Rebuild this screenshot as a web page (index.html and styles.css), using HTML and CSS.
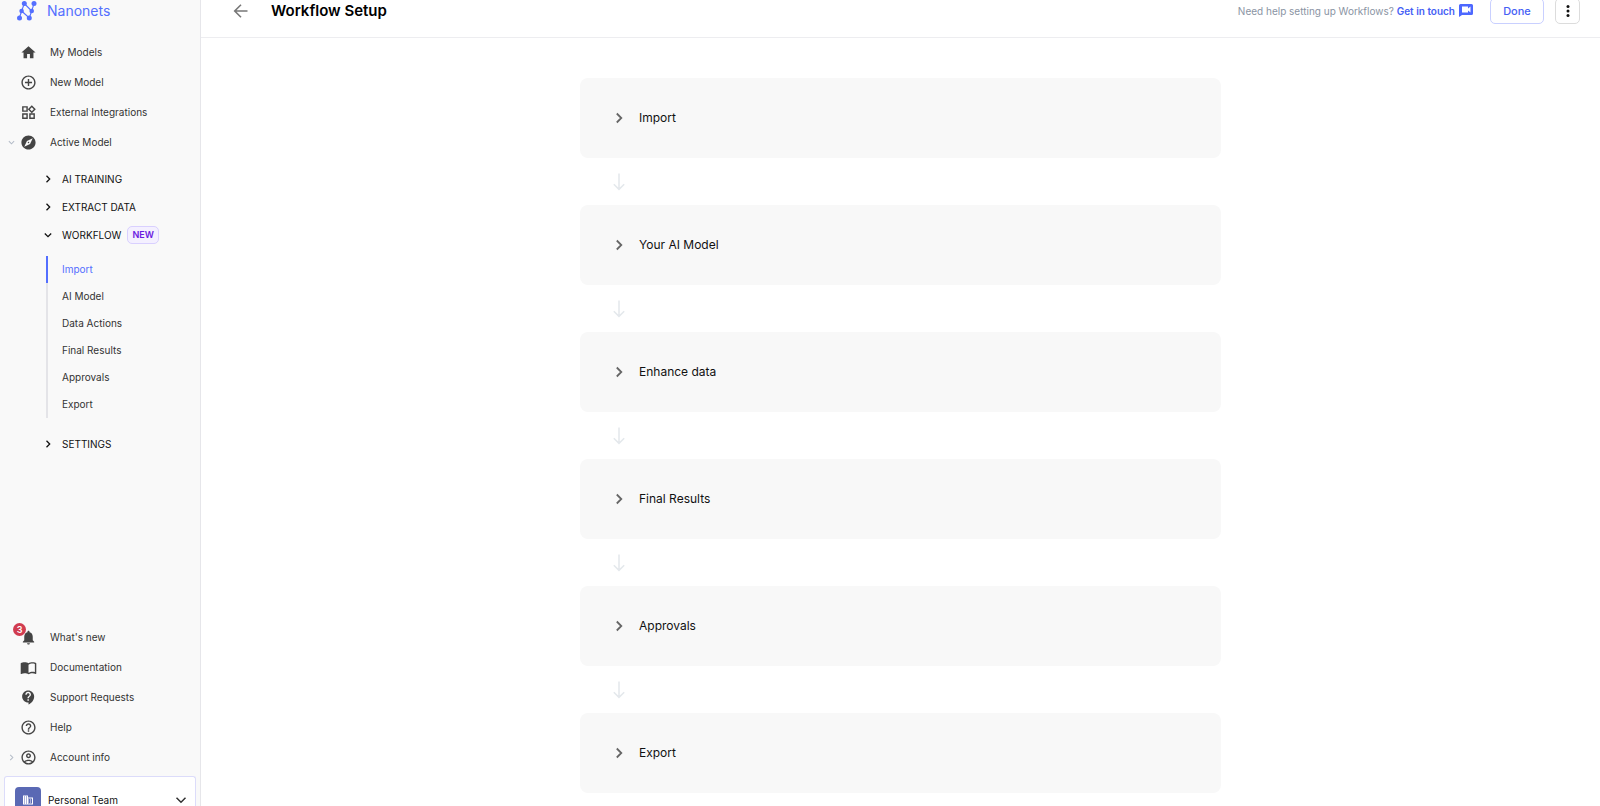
FILE: index.html
```html
<!DOCTYPE html>
<html lang="en">
<head>
<meta charset="utf-8">
<meta name="viewport" content="width=device-width, initial-scale=1">
<title>Workflow Setup - Nanonets</title>
<link rel="stylesheet" href="styles.css">
</head>
<body>
<div class="app">
  <aside class="sidebar">
    <a class="brand" href="#">
      <svg class="brand-logo" viewBox="0 0 20 20" aria-hidden="true">
        <path d="M2.400 17 4.600 10 7.300 2.600 14.700 10M4.600 10 12.300 17 14.700 10 17 2.600" fill="none" stroke="#546fff" stroke-width="1.100"/>
        <g fill="#546fff"><circle cx="7.300" cy="2.600" r="2.500"/><circle cx="17" cy="2.600" r="2.500"/><circle cx="4.600" cy="10" r="2.300"/><circle cx="14.700" cy="10" r="2.300"/><circle cx="2.500" cy="17" r="2.500"/><circle cx="12.300" cy="17" r="2.500"/></g>
      </svg>
      Nanonets
    </a>
    <nav class="menu" aria-label="Main">
      <a class="menu-item" href="#"><span class="twisty"></span><svg class="icon" viewBox="0 0 24 24"><path d="M10 20v-6h4v6h5v-8h3L12 3 2 12h3v8z"/></svg>My Models</a>
      <a class="menu-item" href="#"><span class="twisty"></span><svg class="icon" viewBox="0 0 24 24"><path d="M13 7h-2v4H7v2h4v4h2v-4h4v-2h-4V7zm-1-5C6.48 2 2 6.48 2 12s4.480 10 10 10 10-4.480 10-10S17.520 2 12 2zm0 18c-4.410 0-8-3.590-8-8s3.590-8 8-8 8 3.590 8 8-3.590 8-8 8z"/></svg>New Model</a>
      <a class="menu-item" href="#"><span class="twisty"></span><svg class="icon" viewBox="0 0 24 24"><path d="M16.660 4.520l2.830 2.830-2.830 2.830-2.830-2.830 2.830-2.830M9 5v4H5V5h4m10 10v4h-4v-4h4M9 15v4H5v-4h4m7.660-13.310L11 7.340 16.660 13l5.660-5.660-5.660-5.650zM11 3H3v8h8V3zm10 10h-8v8h8v-8zm-10 0H3v8h8v-8z"/></svg>External Integrations</a>
      <a class="menu-item" href="#" aria-expanded="true"><span class="twisty"><svg class="mini" viewBox="0 0 8 8"><path d="M1 2.500 4 5.500 7 2.500"/></svg></span><svg class="icon" viewBox="0 0 24 24"><path d="M12 10.900c-.61 0-1.100.49-1.100 1.100s.49 1.100 1.100 1.100c.61 0 1.100-.49 1.100-1.100s-.49-1.100-1.100-1.100zM12 2C6.480 2 2 6.480 2 12s4.480 10 10 10 10-4.480 10-10S17.520 2 12 2zm2.190 12.190L6 18l3.810-8.190L18 6l-3.810 8.190z"/></svg>Active Model</a>
    </nav>
    <nav class="sections" aria-label="Active model">
      <button class="section" type="button"><svg class="chev" viewBox="0 0 8 8"><path d="M2.500 .8 5.700 4 2.500 7.200"/></svg>AI TRAINING</button>
      <button class="section" type="button"><svg class="chev" viewBox="0 0 8 8"><path d="M2.500 .8 5.700 4 2.500 7.200"/></svg>EXTRACT DATA</button>
      <button class="section" type="button" aria-expanded="true"><svg class="chev" viewBox="0 0 8 8"><path d="M.8 2.500 4 5.700 7.200 2.500"/></svg>WORKFLOW<span class="tag">NEW</span></button>
      <div class="steps">
        <a class="step-link active" href="#import" aria-current="true">Import</a>
        <a class="step-link" href="#model">AI Model</a>
        <a class="step-link" href="#enhance">Data Actions</a>
        <a class="step-link" href="#results">Final Results</a>
        <a class="step-link" href="#approvals">Approvals</a>
        <a class="step-link" href="#export">Export</a>
      </div>
      <button class="section" type="button"><svg class="chev" viewBox="0 0 8 8"><path d="M2.500 .8 5.700 4 2.500 7.200"/></svg>SETTINGS</button>
    </nav>
    <nav class="menu menu-bottom" aria-label="Support">
      <a class="menu-item" href="#"><span class="twisty"></span><span class="icon-wrap"><svg class="icon" viewBox="0 0 24 24"><path d="M12 22c1.100 0 2-.9 2-2h-4c0 1.100.89 2 2 2zm6-6v-5c0-3.070-1.640-5.640-4.500-6.320V4c0-.83-.67-1.500-1.500-1.500s-1.500.67-1.500 1.500v.68C7.630 5.360 6 7.920 6 11v5l-2 2v1h16v-1l-2-2z"/></svg><span class="badge">3</span></span>What's new</a>
      <a class="menu-item" href="#"><span class="twisty"></span><svg class="icon" viewBox="0 0 24 24"><path d="M21 5c-1.110-.35-2.330-.5-3.500-.5-1.950 0-4.050.4-5.500 1.500-1.450-1.100-3.550-1.500-5.500-1.500S2.450 4.900 1 6v14.650c0 .25.25.5.5.5.1 0 .15-.05.25-.05C3.100 20.450 5.050 20 6.500 20c1.950 0 4.050.4 5.500 1.500 1.350-.85 3.800-1.500 5.500-1.500 1.650 0 3.350.3 4.750 1.050.1.05.15.05.25.05.25 0 .5-.25.5-.5V6c-.6-.45-1.250-.75-2-1zm0 13.500c-1.100-.35-2.300-.5-3.500-.5-1.700 0-4.150.65-5.500 1.500V8c1.350-.85 3.800-1.500 5.500-1.500 1.200 0 2.400.15 3.500.5v11.500z"/></svg>Documentation</a>
      <a class="menu-item" href="#"><span class="twisty"></span><svg class="icon" viewBox="0 0 24 24"><path d="M11.500 2C6.810 2 3 5.810 3 10.500S6.810 19 11.500 19h.5v3c4.860-2.340 8-7 8-11.500C20 5.810 16.190 2 11.500 2zm1 14.500h-2v-2h2v2zm0-3.500h-2c0-3.250 3-3 3-5 0-1.100-.9-2-2-2s-2 .9-2 2h-2c0-2.210 1.790-4 4-4s4 1.790 4 4c0 2.500-3 2.750-3 5z"/></svg>Support Requests</a>
      <a class="menu-item" href="#"><span class="twisty"></span><svg class="icon" viewBox="0 0 24 24"><path d="M11 18h2v-2h-2v2zm1-16C6.480 2 2 6.480 2 12s4.480 10 10 10 10-4.480 10-10S17.520 2 12 2zm0 18c-4.410 0-8-3.590-8-8s3.590-8 8-8 8 3.590 8 8-3.590 8-8 8zm0-14c-2.210 0-4 1.790-4 4h2c0-1.100.9-2 2-2s2 .9 2 2c0 2-3 1.750-3 5h2c0-2.250 3-2.500 3-5 0-2.210-1.790-4-4-4z"/></svg>Help</a>
      <a class="menu-item" href="#"><span class="twisty"><svg class="mini" viewBox="0 0 8 8"><path d="M2.500 1 5.500 4 2.500 7"/></svg></span><svg class="icon" viewBox="0 0 24 24"><path fill-rule="evenodd" d="M12 2C6.480 2 2 6.480 2 12s4.480 10 10 10 10-4.480 10-10S17.520 2 12 2zM7.350 18.500C8.660 17.560 10.260 17 12 17s3.340.56 4.650 1.500C15.340 19.440 13.740 20 12 20s-3.340-.56-4.650-1.500zm10.790-1.380C16.450 15.800 14.320 15 12 15s-4.450.8-6.140 2.120C4.700 15.730 4 13.950 4 12c0-4.420 3.580-8 8-8s8 3.580 8 8c0 1.950-.7 3.730-1.860 5.120zM12 6c-1.930 0-3.500 1.570-3.500 3.500S10.070 13 12 13s3.500-1.570 3.500-3.500S13.930 6 12 6zm0 5c-.83 0-1.500-.67-1.500-1.500S11.170 8 12 8s1.500.67 1.500 1.500S12.830 11 12 11z"/></svg>Account info</a>
    </nav>
    <button class="team" type="button">
      <span class="team-mark"><svg viewBox="0 0 24 24"><path d="M12 7V3H2v18h20V7H12zM6 19H4v-2h2v2zm0-4H4v-2h2v2zm0-4H4V9h2v2zm0-4H4V5h2v2zm4 12H8v-2h2v2zm0-4H8v-2h2v2zm0-4H8V9h2v2zm0-4H8V5h2v2zm10 12h-8v-2h2v-2h-2v-2h2v-2h-2V9h8v10zm-2-8h-2v2h2v-2zm0 4h-2v2h2v-2z"/></svg></span>
      <span class="team-name">Personal Team</span>
      <svg class="team-chev" viewBox="0 0 12 12"><path d="M1.500 3.800 6 8.300 10.500 3.800"/></svg>
    </button>
  </aside>

  <div class="page">
    <header class="topbar">
      <button class="back" type="button" aria-label="Back"><svg viewBox="0 0 16 16"><path d="M14.500 8H2M8 1.700 1.700 8 8 14.300"/></svg></button>
      <h1 class="title">Workflow Setup</h1>
      <p class="help">Need help setting up Workflows? <a href="#">Get in touch</a></p>
      <svg class="chat" viewBox="0 0 14 13" aria-hidden="true"><path fill-rule="evenodd" d="M1.500 0h11A1.500 1.500 0 0 1 14 1.500v8A1.500 1.500 0 0 1 12.500 11H3L0 13V1.500A1.500 1.500 0 0 1 1.500 0zM3 2.500v6h6V6.600L11.500 8.500v-6L9 4.400V2.500z"/></svg>
      <button class="btn done" type="button">Done</button>
      <button class="btn more" type="button" aria-label="More options"><svg viewBox="0 0 4 12"><circle cx="2" cy="1.500" r="1.500"/><circle cx="2" cy="6" r="1.500"/><circle cx="2" cy="10.500" r="1.500"/></svg></button>
    </header>
    <main class="flow">
      <button class="card" id="import" type="button"><svg class="card-chev" viewBox="0 0 12 12"><path d="M3.800 1.500 8.300 6 3.800 10.500"/></svg>Import</button>
      <div class="link"><svg viewBox="0 0 12 18"><path d="M6 .5V16M.8 11.200 6 16.400 11.200 11.200"/></svg></div>
      <button class="card" id="model" type="button"><svg class="card-chev" viewBox="0 0 12 12"><path d="M3.800 1.500 8.300 6 3.800 10.500"/></svg>Your AI Model</button>
      <div class="link"><svg viewBox="0 0 12 18"><path d="M6 .5V16M.8 11.200 6 16.400 11.200 11.200"/></svg></div>
      <button class="card" id="enhance" type="button"><svg class="card-chev" viewBox="0 0 12 12"><path d="M3.800 1.500 8.300 6 3.800 10.500"/></svg>Enhance data</button>
      <div class="link"><svg viewBox="0 0 12 18"><path d="M6 .5V16M.8 11.200 6 16.400 11.200 11.200"/></svg></div>
      <button class="card" id="results" type="button"><svg class="card-chev" viewBox="0 0 12 12"><path d="M3.800 1.500 8.300 6 3.800 10.500"/></svg>Final Results</button>
      <div class="link"><svg viewBox="0 0 12 18"><path d="M6 .5V16M.8 11.200 6 16.400 11.200 11.200"/></svg></div>
      <button class="card" id="approvals" type="button"><svg class="card-chev" viewBox="0 0 12 12"><path d="M3.800 1.500 8.300 6 3.800 10.500"/></svg>Approvals</button>
      <div class="link"><svg viewBox="0 0 12 18"><path d="M6 .5V16M.8 11.200 6 16.400 11.200 11.200"/></svg></div>
      <button class="card" id="export" type="button"><svg class="card-chev" viewBox="0 0 12 12"><path d="M3.800 1.500 8.300 6 3.800 10.500"/></svg>Export</button>
    </main>
  </div>
</div>
</body>
</html>
```

FILE: styles.css
```css
* {
  box-sizing: border-box;
}

body {
  margin: 0;
  height: 100vh;
  overflow: hidden;
  background: #fff;
  color: #111;
  font-family: Inter, "Liberation Sans", sans-serif;
  font-size: 10px;
  line-height: 16px;
}

a {
  color: inherit;
  text-decoration: none;
}

button {
  margin: 0;
  padding: 0;
  border: 0;
  background: none;
  color: inherit;
  font: inherit;
  text-align: left;
  cursor: pointer;
}

svg {
  display: block;
  flex: none;
}

.app {
  display: flex;
  height: 100%;
}

/* Sidebar */
.sidebar {
  display: flex;
  flex-direction: column;
  flex: none;
  width: 201px;
  height: 100%;
  background: #f9f9f9;
  border-right: 1px solid #e6e6ea;
}

.brand {
  display: flex;
  align-items: center;
  gap: 10px;
  height: 22px;
  padding-left: 17px;
  color: #546fff;
  font-size: 14px;
}

.brand-logo {
  width: 20px;
  height: 20px;
}

.menu {
  display: flex;
  flex-direction: column;
  padding-top: 15px;
}

.menu-item {
  display: flex;
  align-items: center;
  height: 30px;
  color: #333;
}

.twisty {
  display: flex;
  justify-content: flex-end;
  width: 15px;
  margin-right: 5px;
}

.mini {
  width: 7px;
  height: 7px;
  fill: none;
  stroke: #b4bcc8;
  stroke-width: 1.2;
}

.icon {
  width: 17px;
  height: 17px;
  margin-right: 13px;
  fill: #444;
}

.icon-wrap {
  position: relative;
}

.badge {
  position: absolute;
  top: -6px;
  left: -7px;
  width: 13px;
  height: 13px;
  border-radius: 50%;
  background: #d13c50;
  color: #fff;
  font-size: 9px;
  font-weight: 600;
  line-height: 13px;
  text-align: center;
}

.sections {
  display: flex;
  flex-direction: column;
  padding-top: 8px;
}

.section {
  display: flex;
  align-items: center;
  height: 28px;
  padding-left: 44px;
}

.chev {
  width: 8px;
  height: 8px;
  margin-right: 10px;
  fill: none;
  stroke: #111;
  stroke-width: 1.3;
}

.tag {
  margin-left: 6px;
  padding: 0 4px;
  border: 1px solid #d9d0ff;
  border-radius: 5px;
  background: #f4f0ff;
  color: #6a1be0;
  font-size: 9px;
  font-weight: 600;
}

.steps {
  display: flex;
  flex-direction: column;
  margin: 7px 0 12px 46px;
  border-left: 2px solid #e4e4e8;
}

.step-link {
  height: 27px;
  margin-left: -2px;
  padding-left: 14px;
  border-left: 2px solid transparent;
  color: #333;
  line-height: 27px;
}

.step-link.active {
  border-left-color: #546fff;
  color: #546fff;
}

.menu-bottom {
  margin-top: auto;
  padding-top: 0;
}

.team {
  display: flex;
  align-items: flex-start;
  flex: none;
  height: 30px;
  margin: 4px 4px 0;
  padding: 10px 8px 0 10px;
  overflow: hidden;
  border: 1px solid #dcdcfa;
  border-bottom: 0;
  border-radius: 3px 3px 0 0;
  background: #fff;
}

.team-mark {
  display: flex;
  align-items: center;
  justify-content: center;
  width: 26px;
  height: 26px;
  margin-right: 7px;
  border-radius: 4px;
  background: #5a69b4;
}

.team-mark svg {
  width: 12px;
  height: 12px;
  fill: #fff;
}

.team-name {
  flex: 1;
  line-height: 26px;
}

.team-chev {
  width: 12px;
  height: 26px;
  fill: none;
  stroke: #333;
  stroke-width: 1.5;
}

/* Page */
.page {
  display: flex;
  flex-direction: column;
  flex: 1;
  min-width: 0;
}

.topbar {
  display: flex;
  align-items: flex-start;
  flex: none;
  height: 40px;
  margin-top: -2px;
  padding: 0 20px 0 32px;
  border-bottom: 1px solid #ededf0;
  line-height: 26px;
}

.back {
  display: flex;
  align-items: center;
  height: 26px;
  margin-right: 22px;
}

.back svg {
  width: 16px;
  height: 16px;
  fill: none;
  stroke: #777;
  stroke-width: 1.6;
}

.title {
  margin: 0;
  color: #000;
  font-size: 15px;
  font-weight: 600;
  line-height: 26px;
}

.help {
  margin: 0 4px 0 auto;
  color: #8a94a3;
}

.help a {
  color: #4560f5;
  font-weight: 600;
}

.chat {
  width: 14px;
  height: 13px;
  margin: 6px 17px 0 0;
  fill: #4d68ff;
}

.btn {
  display: flex;
  align-items: center;
  justify-content: center;
  height: 26px;
  border: 1px solid #c9d0ff;
  border-radius: 5px;
  background: #fff;
}

.done {
  width: 54px;
  margin-right: 11px;
  color: #4560f5;
  font-size: 11px;
  font-weight: 500;
}

.more {
  width: 25px;
  border-color: #dcdcdc;
}

.more svg {
  width: 4px;
  height: 12px;
  fill: #111;
}

.flow {
  display: flex;
  flex-direction: column;
  width: 100%;
  max-width: 641px;
  margin: 0 auto;
  padding-top: 40px;
}

.card {
  display: flex;
  align-items: center;
  gap: 14px;
  flex: none;
  height: 80px;
  padding: 0 33px;
  border-radius: 8px;
  background: #f8f8f8;
  font-size: 12px;
}

.card-chev {
  width: 12px;
  height: 12px;
  fill: none;
  stroke: #666;
  stroke-width: 1.8;
}

.link {
  display: flex;
  align-items: center;
  flex: none;
  height: 47px;
  padding-left: 33px;
}

.link svg {
  width: 12px;
  height: 18px;
  fill: none;
  stroke: #e4e8ec;
  stroke-width: 1.5;
}
```
